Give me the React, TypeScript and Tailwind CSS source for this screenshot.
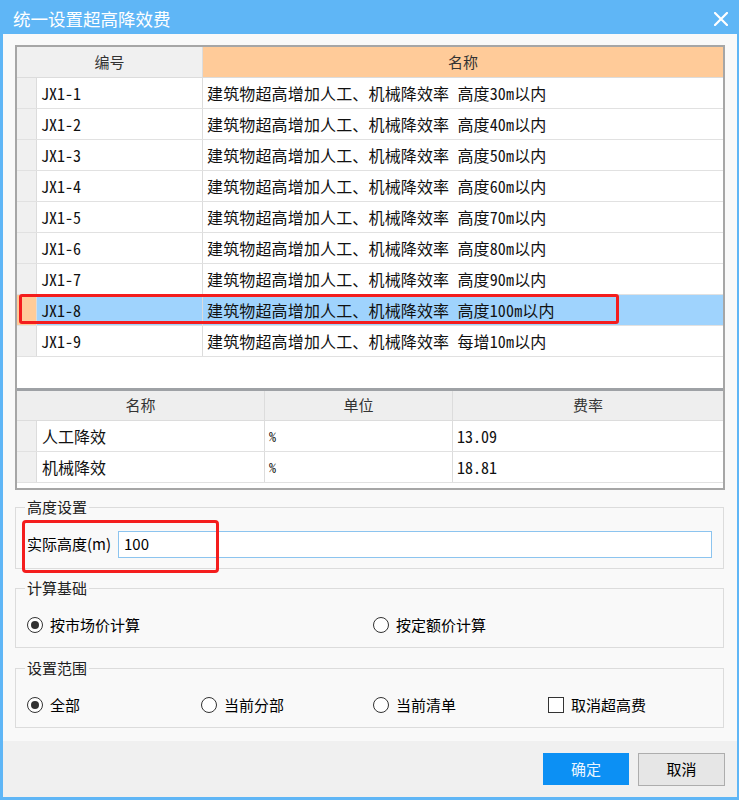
import React from "react";

const rows = [
  { code: "JX1-1", name: "建筑物超高增加人工、机械降效率 高度30m以内" },
  { code: "JX1-2", name: "建筑物超高增加人工、机械降效率 高度40m以内" },
  { code: "JX1-3", name: "建筑物超高增加人工、机械降效率 高度50m以内" },
  { code: "JX1-4", name: "建筑物超高增加人工、机械降效率 高度60m以内" },
  { code: "JX1-5", name: "建筑物超高增加人工、机械降效率 高度70m以内" },
  { code: "JX1-6", name: "建筑物超高增加人工、机械降效率 高度80m以内" },
  { code: "JX1-7", name: "建筑物超高增加人工、机械降效率 高度90m以内" },
  { code: "JX1-8", name: "建筑物超高增加人工、机械降效率 高度100m以内", selected: true },
  { code: "JX1-9", name: "建筑物超高增加人工、机械降效率 每增10m以内" },
];

const rates = [
  { name: "人工降效", unit: "%", rate: "13.09" },
  { name: "机械降效", unit: "%", rate: "18.81" },
];

function Radio({ checked, label }: { checked?: boolean; label: string }) {
  return (
    <div className="flex items-center h-[20px]">
      <span className="w-[16px] h-[16px] rounded-full border border-[#333333] bg-white flex items-center justify-center">
        {checked && <span className="w-[8px] h-[8px] rounded-full bg-[#333333]" />}
      </span>
      <span className="ml-[7px] text-[15px] leading-[20px] text-black">{label}</span>
    </div>
  );
}

function Check({ label }: { label: string }) {
  return (
    <div className="flex items-center h-[20px]">
      <span className="w-[16px] h-[16px] border border-[#333333] bg-white" />
      <span className="ml-[7px] text-[15px] leading-[20px] text-black">{label}</span>
    </div>
  );
}

export default function App() {
  return (
    <div className="w-[739px] h-[800px] bg-[#5fb6f6] flex flex-col font-['Noto_Sans_CJK_SC',sans-serif]">
      <div className="h-[34px] flex items-center justify-between pl-[13px] pr-[11px] pt-[3px] shrink-0">
        <span className="text-white text-[17.5px] leading-[20px]">统一设置超高降效费</span>
        <svg width="14" height="14" viewBox="0 0 14 14">
          <path d="M1 1L13 13M13 1L1 13" stroke="white" strokeWidth="2.2" strokeLinecap="square" />
        </svg>
      </div>
      <div className="ml-[3px] mr-[2px] mb-[3px] flex-1 bg-[#f9f9f9] flex flex-col">
        {/* Tables */}
        <div className="mt-[11px] ml-[12px] w-[710px] border-2 border-[#a6a6a6] bg-white font-['Noto_Sans_Mono_CJK_SC','Liberation_Mono','Noto_Sans_CJK_SC',monospace] text-[16px] text-[#111111]">
          <div className="flex h-[31px] border-b border-[#dcdcdc] font-['Noto_Sans_CJK_SC',sans-serif] text-[15px] text-[#333333]">
            <div className="w-[186px] bg-[#f0f0f0] border-r border-[#dcdcdc] flex items-center justify-center">编号</div>
            <div className="flex-1 bg-[#ffcb99] flex items-center justify-center">名称</div>
          </div>
          {rows.map((r) => (
            <div key={r.code} className="relative flex h-[31px] border-b border-[#e1e1e1]">
              <div className={`w-[20px] border-r border-[#dcdcdc] ${r.selected ? "bg-[#ffcc99]" : "bg-[#f0f0f0]"}`} />
              <div className={`w-[166px] border-r border-[#dcdcdc] pl-[4px] flex items-center ${r.selected ? "bg-[#9fd3fd]" : ""}`}>
                {r.code}
              </div>
              <div className={`flex-1 pl-[4px] flex items-center whitespace-pre tracking-[0.15px] ${r.selected ? "bg-[#9fd3fd]" : ""}`}>
                {r.name}
              </div>
              {r.selected && (
                <div className="absolute left-[2px] top-[-1px] w-[600px] h-[30px] border-[3px] border-[#f41d1d] rounded-[3px]" />
              )}
            </div>
          ))}
          <div className="h-[31px]" />
          <div className="h-[3px] bg-[#9ea1a5]" />
          <div className="flex h-[30px] border-b border-[#dcdcdc] bg-[#eeeeee] font-['Noto_Sans_CJK_SC',sans-serif] text-[15px] text-[#333333]">
            <div className="w-[248px] border-r border-[#dcdcdc] flex items-center justify-center">名称</div>
            <div className="w-[188px] border-r border-[#dcdcdc] flex items-center justify-center">单位</div>
            <div className="flex-1 flex items-center justify-center">费率</div>
          </div>
          {rates.map((r) => (
            <div key={r.name} className="flex h-[31px] border-b border-[#e1e1e1]">
              <div className="w-[20px] bg-[#f0f0f0] border-r border-[#dcdcdc]" />
              <div className="w-[228px] border-r border-[#dcdcdc] pl-[5px] flex items-center">{r.name}</div>
              <div className="w-[188px] border-r border-[#dcdcdc] pl-[4px] flex items-center text-[14px]">{r.unit}</div>
              <div className="flex-1 pl-[4px] flex items-center">{r.rate}</div>
            </div>
          ))}
          <div className="h-[5px]" />
        </div>

        {/* 高度设置 */}
        <fieldset className="mt-[8px] ml-[12px] w-[709px] border border-[#dcdcdc] pl-[11px] pr-[11px] pt-[15px] pb-[10px]">
          <legend className="px-[2px] -ml-[2px] text-[15px] leading-[18px] text-[#222222]">高度设置</legend>
          <div className="relative flex items-center h-[27px]">
            <span className="w-[91px] text-[15px] text-black">实际高度(m)</span>
            <div className="flex-1 h-[27px] border border-[#8cc4ef] bg-white pl-[5px] flex items-center text-[15px] text-black">
              100
            </div>
            <div className="absolute left-[-5px] top-[-11px] w-[197px] h-[53px] border-[3px] border-[#f41d1d] rounded-[4px]" />
          </div>
        </fieldset>

        {/* 计算基础 */}
        <fieldset className="mt-[10px] ml-[12px] w-[709px] border border-[#dcdcdc] pl-[11px] pr-[11px] pt-[18px] pb-[12px]">
          <legend className="px-[2px] -ml-[2px] text-[15px] leading-[18px] text-[#222222]">计算基础</legend>
          <div className="flex items-center">
            <div className="w-[346px]">
              <Radio checked label="按市场价计算" />
            </div>
            <Radio label="按定额价计算" />
          </div>
        </fieldset>

        {/* 设置范围 */}
        <fieldset className="mt-[11px] ml-[12px] w-[709px] border border-[#dcdcdc] pl-[11px] pr-[11px] pt-[18px] pb-[12px]">
          <legend className="px-[2px] -ml-[2px] text-[15px] leading-[18px] text-[#222222]">设置范围</legend>
          <div className="flex items-center">
            <div className="w-[174px]">
              <Radio checked label="全部" />
            </div>
            <div className="w-[172px]">
              <Radio label="当前分部" />
            </div>
            <div className="w-[175px]">
              <Radio label="当前清单" />
            </div>
            <Check label="取消超高费" />
          </div>
        </fieldset>

        {/* Footer */}
        <div className="mt-auto h-[56px] bg-[#f0f0f0] flex justify-end items-start pt-[12px] pr-[12px] gap-[9px]">
          <button className="w-[86px] h-[32px] bg-[#0c90f4] text-[#eaf5ff] text-[15px] flex items-center justify-center">
            确定
          </button>
          <button className="w-[87px] h-[33px] bg-[#e6e6e6] border border-[#adadad] text-black text-[15px] flex items-center justify-center">
            取消
          </button>
        </div>
      </div>
    </div>
  );
}
